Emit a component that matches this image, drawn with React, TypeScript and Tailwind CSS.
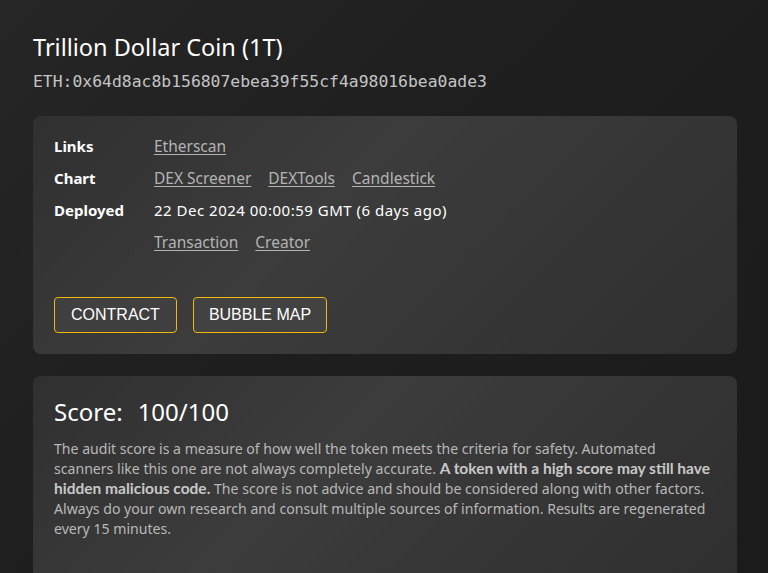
const rows = [
  { label: "Links", links: ["Etherscan"] },
  { label: "Chart", links: ["DEX Screener", "DEXTools", "Candlestick"] },
];

const font = { fontFamily: "'Noto Sans', Lato, sans-serif" };

export default function App() {
  return (
    <div
      className="min-h-[573px] bg-[linear-gradient(135deg,#262626_0%,#1e1e1e_45%,#1b1b1b_100%)] pl-[33px] pr-[31px] pt-[33px] text-white"
      style={font}
    >
      <h1 className="text-[23.5px] leading-[28px] text-white">Trillion Dollar Coin (1T)</h1>
      <div className="mt-[10px] font-['DejaVu_Sans_Mono',monospace] text-[16.4px] leading-[22px] text-[#c4c4c4]">
        ETH:0x64d8ac8b156807ebea39f55cf4a98016bea0ade3
      </div>

      <div className="mt-[23px] rounded-lg bg-[linear-gradient(135deg,#303030_0%,#3c3c3c_40%,#2f2f2f_100%)] px-[21px] pb-[21px] pt-[19px]">
        <div className="grid grid-cols-[100px_1fr] gap-y-[10px] text-[15px] leading-[22px]">
          {rows.map((r) => (
            <div key={r.label} className="contents">
              <div className="font-bold">{r.label}</div>
              <div className="flex gap-[17px]">
                {r.links.map((l) => (
                  <a key={l} href="#" className="text-[15.5px] text-[#b3b3b3] underline underline-offset-2">
                    {l}
                  </a>
                ))}
              </div>
            </div>
          ))}
          <div className="font-bold">Deployed</div>
          <div className="tracking-[0.5px]">22 Dec 2024 00:00:59 GMT (6 days ago)</div>
          <div />
          <div className="flex gap-[17px]">
            <a href="#" className="text-[15.5px] text-[#b3b3b3] underline underline-offset-2">Transaction</a>
            <a href="#" className="text-[15.5px] text-[#b3b3b3] underline underline-offset-2">Creator</a>
          </div>
        </div>

        <div className="mt-[44px] flex gap-[16px] font-['Liberation_Sans',Arial,sans-serif]">
          <button className="h-[36px] rounded-[4px] border border-[#f0b90b] bg-[#404040] px-[16px] text-[16px] text-white">
            CONTRACT
          </button>
          <button className="h-[36px] rounded-[4px] border border-[#f0b90b] bg-[#424242] px-[15px] text-[16px] text-white">
            BUBBLE MAP
          </button>
        </div>
      </div>

      <div className="mt-[22px] rounded-lg bg-[linear-gradient(135deg,#303030_0%,#3c3c3c_40%,#2f2f2f_100%)] px-[21px] pb-[40px] pt-[22px]">
        <h2 className="flex gap-[15px] text-[24px] leading-[28px]">
          <span>Score:</span>
          <span>100/100</span>
        </h2>
        <p className="mt-[13px] text-[14.1px] leading-[20px] text-[#b8b8b8]">
          The audit score is a measure of how well the token meets the criteria for safety. Automated scanners like
          this one are not always completely accurate.{" "}
          <b className="font-['Lato',sans-serif] text-[15.5px] font-bold leading-[14px] text-[#c8c8c8]">
            A token with a high score may still have hidden malicious code.
          </b>{" "}
          The score is not advice and should be considered along with other factors. Always do your own research and
          consult multiple sources of information. Results are regenerated every 15 minutes.
        </p>
      </div>
    </div>
  );
}
